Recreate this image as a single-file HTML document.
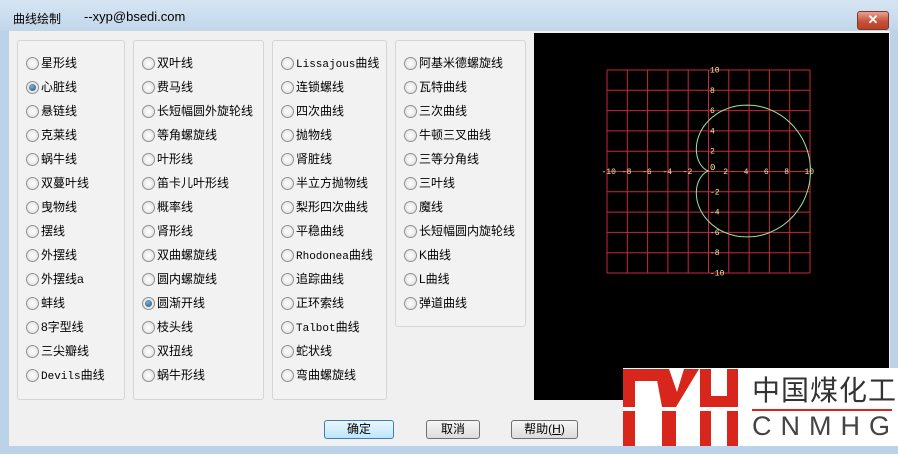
<!DOCTYPE html>
<html><head><meta charset="utf-8"><style>
body{margin:0;width:898px;height:454px;overflow:hidden;background:#bcd2e8;font-family:"Liberation Sans","Noto Sans CJK SC",sans-serif;font-size:12px;color:#000;position:relative}
.a{position:absolute}
#title{left:0;top:0;width:898px;height:31px;background:linear-gradient(#d6e5f3,#c2d6ea)}
#client{left:9px;top:31px;width:881px;height:415px;background:#f0f0f0}
.g{position:absolute;border:1px solid #d5d5d5;border-radius:3px;background:#f2f2f2;top:40px}
.r{position:absolute;height:16px;line-height:16px;white-space:nowrap}
.r i{position:absolute;left:-15px;top:2px;width:11px;height:11px;border-radius:50%;border:1px solid #8f8f8f;background:radial-gradient(#fff,#dcdcdc)}
.r i.on::after{content:"";position:absolute;left:2px;top:2px;width:7px;height:7px;border-radius:50%;background:radial-gradient(circle at 40% 35%,#7db0d8,#1d4d74)}
.mono{font-family:"Liberation Mono","Noto Sans CJK SC",monospace;font-size:11px}
.btn{position:absolute;top:420px;height:17px;border:1px solid #707070;border-radius:3px;background:linear-gradient(#f6f6f6,#dcdcdc);text-align:center;line-height:17px}
</style></head><body>
<div id="title" class="a"></div>
<div class="a" style="left:13px;top:10px;font-size:12px">曲线绘制</div>
<div class="a" style="left:84px;top:9px;font-size:13px">--xyp@bsedi.com</div>
<div class="a" style="left:857px;top:11px;width:30px;height:17px;border:1px solid #7a3a2a;border-radius:3px;background:linear-gradient(#e8a293,#c8513a 55%,#b8412a);color:#fff;text-align:center;line-height:16px;font-weight:bold;font-size:13px">✕</div>
<div id="client" class="a"></div>
<div class="g" style="left:17px;width:106px;height:358px"></div>
<div class="g" style="left:133px;width:129px;height:358px"></div>
<div class="g" style="left:272px;width:113px;height:358px"></div>
<div class="g" style="left:395px;width:129px;height:285px"></div>
<div id="lists"></div>
<div class="a" style="left:534px;top:33px;width:355px;height:367px;background:#000"></div>
<svg class="a" style="left:534px;top:33px" width="355" height="367" id="pl"></svg>
<div class="btn" style="left:324px;width:68px;border-color:#3c7fb1;background:linear-gradient(#eaf6fd,#bee6fd)">确定</div>
<div class="btn" style="left:426px;width:52px">取消</div>
<div class="btn" style="left:511px;width:65px">帮助(<u>H</u>)</div>
<div class="a" style="left:623px;top:368px;width:275px;height:78px;background:#fff"></div>
<svg class="a" style="left:0;top:0" width="898" height="454">
<g fill="#d9261c">
<rect x="623" y="369" width="36" height="12"/>
<rect x="623" y="369" width="12" height="38"/><rect x="623" y="411" width="12" height="35"/>
<polygon points="655,369 669,369 677,392 684,369 699,369 676,407 662,407"/>
<rect x="662" y="411" width="14" height="35"/>
<rect x="700" y="369" width="11" height="38"/><rect x="700" y="411" width="11" height="35"/>
<rect x="727" y="369" width="11" height="38"/><rect x="727" y="411" width="11" height="35"/>
<rect x="700" y="396" width="38" height="11"/>
</g></svg>
<div class="a" style="left:752px;top:369px;font-size:28px;color:#333;letter-spacing:1px;font-family:'Noto Sans CJK SC',sans-serif">中国煤化工</div>
<div class="a" style="left:752px;top:409px;width:140px;height:2px;background:#d9261c"></div>
<div class="a" style="left:752px;top:411px;font-size:27px;color:#444;letter-spacing:9px">CNMHG</div>
<script>
var cols=[[41,["星形线","心脏线","悬链线","克莱线","蜗牛线","双蔓叶线","曳物线","摆线","外摆线","外摆线a","蚌线","8字型线","三尖瓣线","<span class=mono>Devils</span>曲线"],1],
[157,["双叶线","费马线","长短幅圆外旋轮线","等角螺旋线","叶形线","笛卡儿叶形线","概率线","肾形线","双曲螺旋线","圆内螺旋线","圆渐开线","枝头线","双扭线","蜗牛形线"],10],
[296,["<span class=mono>Lissajous</span>曲线","连锁螺线","四次曲线","抛物线","肾脏线","半立方抛物线","梨形四次曲线","平稳曲线","<span class=mono>Rhodonea</span>曲线","追踪曲线","正环索线","<span class=mono>Talbot</span>曲线","蛇状线","弯曲螺旋线"],-1],
[419,["阿基米德螺旋线","瓦特曲线","三次曲线","牛顿三叉曲线","三等分角线","三叶线","魔线","长短幅圆内旋轮线","K曲线","L曲线","弹道曲线"],-1]];
var h="";cols.forEach(function(c){c[1].forEach(function(t,i){h+='<div class="r" style="left:'+c[0]+'px;top:'+(55+i*24)+'px"><i'+(i==c[2]?' class="on"':'')+'></i>'+t+'</div>';});});
document.getElementById("lists").innerHTML=h;
var s="",cx=175,cy=138,k=20.3;
for(var i=0;i<=10;i++){s+='<line x1="'+(73+i*k)+'" y1="37" x2="'+(73+i*k)+'" y2="240" stroke="#c8283c"/><line x1="73" y1="'+(37+i*k)+'" x2="276" y2="'+(37+i*k)+'" stroke="#c8283c"/>';}
var lab=[-10,-8,-6,-4,-2,2,4,6,8,10];
lab.forEach(function(v){s+='<text x="'+(cx+v*k/2-6)+'" y="'+(cy+3)+'" fill="#f4e8a0" font-size="8" font-family="Liberation Mono">'+v+'</text>';s+='<text x="'+(cx+1)+'" y="'+(cy-v*k/2+3)+'" fill="#f4e8a0" font-size="8" font-family="Liberation Mono">'+v+'</text>';});
s+='<text x="'+(cx+1)+'" y="'+(cy-1)+'" fill="#f4e8a0" font-size="9" font-family="Liberation Mono">0</text>';
var pts=[];for(var j=0;j<=360;j+=2){var t=j*Math.PI/180,r=5*(1+Math.cos(t));pts.push((cx+r*Math.cos(t)*k/2).toFixed(1)+","+(cy-r*Math.sin(t)*k/2).toFixed(1));}
s+='<polyline points="'+pts.join(" ")+'" fill="none" stroke="#9be89b"/>';
document.getElementById("pl").innerHTML=s;
</script>
</body></html>
